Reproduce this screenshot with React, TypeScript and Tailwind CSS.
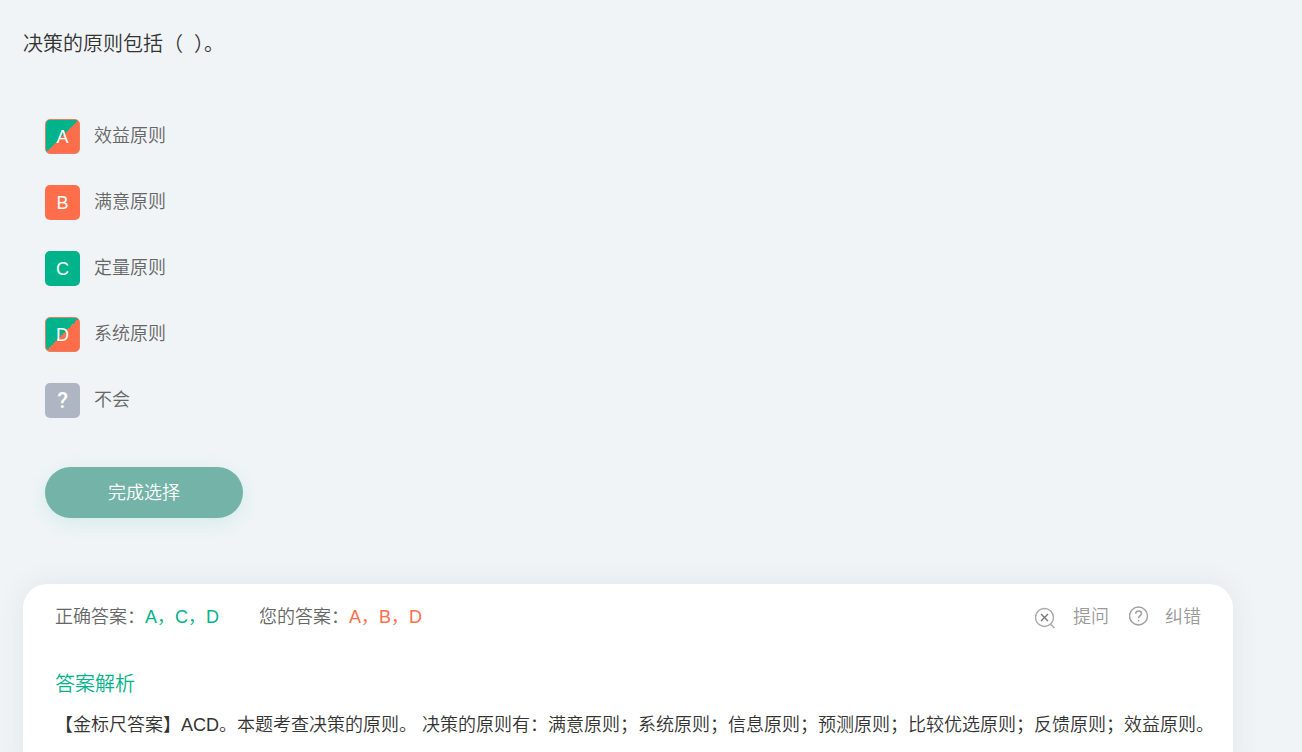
import React from "react"
import clsx from "clsx"

type Status = "both" | "wrong" | "right" | "none"

interface Option {
  key: string
  label: string
  status: Status
}

const options: Option[] = [
  { key: "A", label: "效益原则", status: "both" },
  { key: "B", label: "满意原则", status: "wrong" },
  { key: "C", label: "定量原则", status: "right" },
  { key: "D", label: "系统原则", status: "both" },
  { key: "?", label: "不会", status: "none" },
]

const badgeStyles: Record<Status, string> = {
  both: "border border-[#e8805f] bg-[linear-gradient(135deg,#00b38a_50%,#ff6e4a_50%)]",
  wrong: "bg-[#ff6e4a]",
  right: "bg-[#00b38a]",
  none: "bg-[#afb6c3] font-['Roboto','Liberation_Sans',sans-serif] text-[22px] font-medium",
}

const OptionItem = ({ option }: { option: Option }) => (
  <li>
    <button type="button" className="flex items-center gap-3.5">
      <span
        className={clsx(
          "flex h-[35px] w-[35px] items-center justify-center rounded-[5px] text-white",
          badgeStyles[option.status]
        )}
      >
        {option.key}
      </span>
      <span className="pb-0.5 text-[#666]">{option.label}</span>
    </button>
  </li>
)

const AskIcon = () => (
  <svg className="mt-0.5" width="22" height="22" viewBox="0 0 22 22" fill="none" stroke="#aaa" aria-hidden="true">
    <circle cx="9.5" cy="10.5" r="9" strokeWidth="1.4" />
    <path d="M6 7l7 7M13 7l-7 7" stroke="#777" strokeWidth="1.4" />
    <path d="M15.5 17l4 4" strokeWidth="1.4" />
  </svg>
)

const ReportIcon = () => (
  <svg width="20" height="22" viewBox="0 0 20 22" fill="none" stroke="#a0a0a0" aria-hidden="true">
    <circle cx="9.5" cy="10" r="9" strokeWidth="1.4" />
    <path
      d="M6.7 7.8c0-1.8 1.2-2.9 2.9-2.9s2.9 1.1 2.9 2.6c0 2-2.9 2.3-2.9 4.8"
      strokeWidth="1.5"
    />
    <path d="M9.6 13.9v1.5" strokeWidth="1.5" />
  </svg>
)

const App = () => {
  return (
    <main
      lang="zh-CN"
      className="min-h-screen overflow-hidden bg-[#f0f4f7] pt-[29px] pr-[69px] pl-[23px] font-['Liberation_Sans','Noto_Sans_CJK_SC',sans-serif] text-[18px] leading-[30px] font-[350]"
    >
      {/* question */}
      <h1 className="text-[20px] font-[350] text-[#333]">决策的原则包括（&nbsp; ）。</h1>

      {/* options */}
      <ul className="mt-[60px] ml-[22px] flex flex-col gap-[31px]">
        {options.map((option) => (
          <OptionItem key={option.key} option={option} />
        ))}
      </ul>

      <button
        type="button"
        className="mt-[49px] ml-[22px] h-[51px] w-[198px] rounded-full bg-[#73b3a8] text-white shadow-[0_5px_20px_rgba(0,179,138,0.12)]"
      >
        完成选择
      </button>

      {/* answer card */}
      <section className="mt-[66px] rounded-t-3xl bg-white pt-[18px] pl-8 shadow-[0_0_30px_rgba(50,80,100,0.08)]">
        <div className="flex items-center justify-between pr-8">
          <div className="flex gap-10 text-[#666]">
            <p>
              正确答案：<span className="text-[#00b38a]">A，C，D</span>
            </p>
            <p>
              您的答案：<span className="text-[#ff6e4a]">A，B，D</span>
            </p>
          </div>
          <div className="flex gap-5 text-[#999]">
            <button type="button" className="flex items-center gap-4">
              <AskIcon />
              提问
            </button>
            <button type="button" className="flex items-center gap-4">
              <ReportIcon />
              纠错
            </button>
          </div>
        </div>

        <h2 className="mt-[37px] text-[20px] font-[350] text-[#00b38a]">答案解析</h2>
        <p className="mt-[11px] pb-8 text-[#333]">
          【金标尺答案】ACD。本题考查决策的原则。 决策的原则有：满意原则；系统原则；信息原则；预测原则；比较优选原则；反馈原则；效益原则。
        </p>
      </section>
    </main>
  )
}

export default App
